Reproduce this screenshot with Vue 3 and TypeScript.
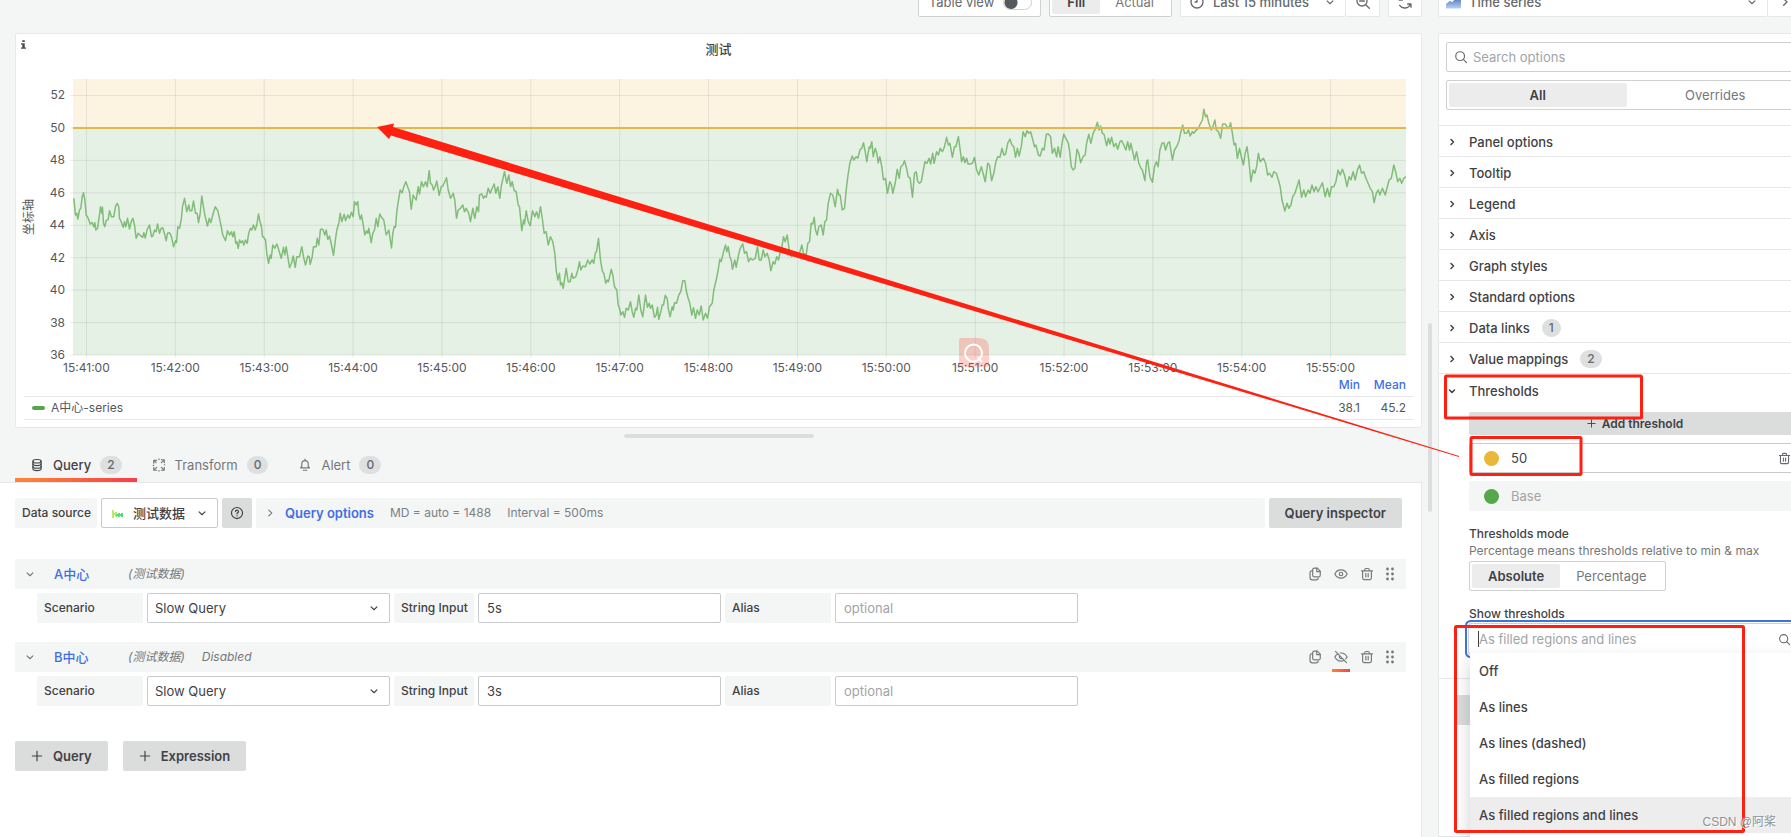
<script setup lang="ts">
import { h, ref } from 'vue'

const shapes: Record<string, string[]> = {
  down: ['M7 10l5 5 5-5'],
  right: ['M10 7l5 5-5 5'],
  plus: ['M12 4v16M4 12h16'],
  search: ['M10.5 3a7.5 7.5 0 1 0 0 15 7.5 7.5 0 0 0 0-15z', 'M16 16l5.5 5.5'],
  zoomOut: ['M10.5 3a7.5 7.5 0 1 0 0 15 7.5 7.5 0 0 0 0-15z', 'M16 16l5.5 5.5M7 10.5h7'],
  clock: ['M12 3a9 9 0 1 0 0 18 9 9 0 0 0 0-18z', 'M12 7v5H9'],
  sync: ['M3 4v5h5M4 9a9 9 0 0 1 16-2M21 20v-5h-5M20 15a9 9 0 0 1-16 2'],
  database: [
    'M12 2.5c4 0 7 1.300 7 3s-3 3-7 3-7-1.300-7-3 3-3 7-3z',
    'M5 5.500v13c0 1.700 3 3 7 3s7-1.300 7-3v-13',
    'M5 10c0 1.700 3 3 7 3s7-1.300 7-3M5 14.500c0 1.700 3 3 7 3s7-1.300 7-3',
  ],
  process: ['M3 9V4h5M4 5l3 3M16 3h5v5M20 4l-4 4M21 16v5h-5M20 20l-4-4M8 21H3v-5M4 20l4-4M2 12.500h1M21 11.500h1M11.500 2h1M11.500 22h1'],
  bell: ['M4.500 17h15l-2-3v-4a5.500 5.500 0 0 0-11 0v4z', 'M9 21h6M12 4V2'],
  help: ['M12 2.500a9.500 9.500 0 1 0 0 19 9.500 9.500 0 0 0 0-19z', 'M9.500 9.500a2.500 2.500 0 1 1 3.500 2.300c-.7.3-1 .8-1 1.700M12 16.500v.5'],
  copy: ['M11 2h5l5 5v7a3 3 0 0 1-3 3h-7a3 3 0 0 1-3-3V5a3 3 0 0 1 3-3z', 'M15 2v6h6M8 6C5 6 3.500 7 3.500 10v8c0 2.500 1.500 4 4 4H14c2.500 0 3.500-1 3.500-3'],
  eye: ['M1.500 12c2-4.300 6-7 10.500-7s8.500 2.700 10.500 7c-2 4.300-6 7-10.500 7S3.500 16.300 1.500 12z', 'M12 9a3 3 0 1 0 0 6 3 3 0 0 0 0-6z'],
  eyeOff: ['M2.500 2.500l19 19', 'M6.500 7c-2 1-4 3-5 5 2 4 6 7 10.500 7 1.500 0 3-.3 4.500-1M10.500 5.200c4.500-.6 9.500 2 12 6.800-.6 1.300-1.500 2.300-2.500 3.200', 'M9.500 10.500a3 3 0 0 0 4 4'],
  trash: ['M2.500 6.500h19M8 6.500V5a2.500 2.500 0 0 1 2.500-2.500h3A2.500 2.500 0 0 1 16 5v1.500M4.500 6.500V19A2.500 2.500 0 0 0 7 21.500h10a2.500 2.500 0 0 0 2.500-2.500V6.500', 'M10 11v6M14 11v6'],
}

const Icon = (props: { name: string }) =>
  h(
    'svg',
    { class: 'icon', viewBox: '0 0 24 24', 'aria-hidden': 'true' },
    shapes[props.name].map((d) => h('path', { d })),
  )
Icon.props = ['name']

const sections = [
  { name: 'Panel options', count: 0 },
  { name: 'Tooltip', count: 0 },
  { name: 'Legend', count: 0 },
  { name: 'Axis', count: 0 },
  { name: 'Graph styles', count: 0 },
  { name: 'Standard options', count: 0 },
  { name: 'Data links', count: 1 },
  { name: 'Value mappings', count: 2 },
]

const tabs = [
  { name: 'Query', icon: 'database', count: 2 },
  { name: 'Transform', icon: 'process', count: 0 },
  { name: 'Alert', icon: 'bell', count: 0 },
]

const queries = ref([
  { id: 'a', name: 'A中心', input: '5s', hidden: false },
  { id: 'b', name: 'B中心', input: '3s', hidden: true },
])

const choices = ['Off', 'As lines', 'As lines (dashed)', 'As filled regions', 'As filled regions and lines']
const chosen = 'As filled regions and lines'

const yTicks = [52, 50, 48, 46, 44, 42, 40, 38, 36]
const xTicks = Array.from({ length: 15 }, (_, i) => `15:${41 + i}:00`)

const W = 1333
const H = 276
const tickY = (v: number) => H - ((v - 36) * 259.500) / 16
const tickX = (i: number) => 13.500 + i * (W / 15)

// Samples come in blocks, each with its own origin and number of steps per unit.
interface Block { x: number; y: number; step: number; samples: string }
const blocks: Block[] = [
  {
    x: -73.5, y: -79, step: 3,
    samples:
      '223,595 228,645 232,640 235,657 240,630 244,625 248,590 252,578 256,600 260,645 266,655 272,672 278,668 283,680 286,668 289,690 294,685 299,650 303,620 307,640 309,622 312,670 316,680 320,662 326,658 330,632 336,650 343,650 348,620 353,610 358,620 360,655 365,665 371,682 375,665 379,680 384,655 390,687 395,665 400,655 405,675 410,715 416,700 424,708 430,712 433,698 437,714 443,688 450,675 456,710 460,708 465,690 470,695 474,672 480,700 485,685 490,683 496,705 500,722 504,700 510,698 516,710 522,740 528,722 531,728 535,680 540,685 545,660 549,620 555,595 562,635 568,615 571,632 577,632 582,603 588,640 593,640 597,668 602,640 607,588 611,615 616,645 624,678 629,655 634,668 640,645 647,620 655,632 660,655 665,680 670,705 678,722 684,692 690,705 696,695 700,710 704,695 709,730 712,725 716,745 720,720 724,728 729,722 733,735 738,720 743,730 748,698 753,685 757,690 762,675 767,690 772,675 777,642 781,662 786,680 789,710 793,712 798,720 802,760 807,790 812,765 815,775 820,735 826,745 832,732 838,750 845,775 852,742 856,765 860,740 865,770 870,803 876,790 881,768 887,802 892,770 900,770 907,740 912,770 918,795 925,768 929,770 932,793 938,770 942,740 950,740 953,715 958,735 963,688 970,688 976,705 980,690 985,718 990,708 996,735 1002,766 1007,725 1012,690 1018,670 1022,640 1027,665 1034,643 1038,662 1045,645 1050,655 1056,637 1061,650 1065,605 1070,615 1075,605 1078,640 1082,658 1086,645 1092,680 1096,705 1101,692 1105,700 1108,685 1115,728 1120,700 1125,690 1130,655 1135,680 1141,642 1148,655 1153,660 1160,705 1168,690 1176,744 1180,700 1184,680 1188,682 1192,635 1197,600 1202,570 1208,578 1213,560 1219,545 1225,562 1230,575 1235,628 1241,585 1245,592 1250,600 1256,560 1260,582 1266,545 1272,560 1278,545 1283,560 1289,512 1293,550 1298,555 1302,570 1307,560 1312,543 1319,586 1325,560 1330,558 1336,545 1341,533 1346,570 1353,595 1361,580 1366,600 1371,655 1376,630 1383,625 1390,615 1395,635 1400,625 1408,640 1413,665 1420,625 1426,655 1432,620 1437,635',
  },
  {
    x: 326.5, y: -19, step: 3,
    samples:
      '240,405 247,402 252,415 256,408 260,412 266,385 272,400 278,385 284,372 289,400 295,380 301,415 306,375 315,335 322,370 328,345 333,380 338,365 344,392 350,395 356,435 360,440 367,512 372,480 375,492 380,452 386,485 392,497 399,452 406,470 411,455 417,475 423,440 429,480 434,520 440,515 446,555 453,530 460,545 466,580 470,630 475,660 480,640 483,675 487,668 491,685 500,625 506,665 512,665 517,640 521,655 529,650 535,630 540,605 544,630 550,618 558,620 565,600 571,612 578,600 583,610 587,580 591,575 597,535 603,600 608,632 613,640 619,670 623,660 627,665 635,628 640,645 645,680 652,690 656,735 660,745 664,765 670,755 675,772 680,745 686,750 693,725 698,755 703,772 708,745 712,750 718,705 724,750 730,770 738,705 744,742 749,730 753,745 758,735 765,772 770,765 774,742 778,778 785,750 788,735 792,735 797,706 803,715 807,750 812,770 818,740 821,750 825,728 831,730 838,705 844,695 850,662 856,662 862,700 866,715 871,730 877,765 882,743 888,775 893,750 899,765 905,738 911,780 918,760 924,775 930,740 938,730 943,690 950,660 956,630 961,598 965,605 971,580 978,555 982,575 986,560 991,590 995,600 999,628 1006,600 1010,622 1017,585 1022,565 1030,552 1035,580 1041,575 1047,605 1053,595 1060,600 1067,595 1074,560 1079,600 1085,600 1091,570 1096,590 1103,580 1109,600 1114,632 1121,605 1126,612 1132,590 1137,600 1144,570 1148,555 1152,530 1157,545 1163,525 1169,570 1176,590 1184,580 1192,590 1200,580 1207,555 1212,580 1220,585 1225,550 1230,545 1235,490 1240,492 1244,472 1248,510 1253,525 1258,500 1265,495 1271,525 1276,485 1281,480 1286,430 1293,400 1300,405 1307,440 1314,388 1318,405 1322,405 1328,450 1335,445 1340,390 1345,350 1351,310 1358,288 1363,300 1370,290 1375,295 1382,268 1387,265 1392,248 1397,275 1402,305 1409,260 1412,265 1417,245 1421,290 1427,265 1432,280 1436,308 1441,290 1447,320 1452,360 1458,355 1464,400 1471,365 1476,375 1480,400 1487,370 1493,328 1499,355 1504,320 1510,315 1515,302 1520,320 1526,350 1532,355 1539,412 1545,340 1550,335 1555,365',
  },
  {
    x: 806.5, y: -79, step: 2.8,
    samples:
      '112,550 117,545 123,510 127,485 133,490 139,475 143,492 149,460 153,490 160,455 165,465 170,445 176,455 182,440 188,412 193,435 197,430 204,472 210,440 214,440 221,410 226,450 230,485 235,470 239,488 244,475 248,492 254,492 260,490 266,472 272,510 278,525 285,500 290,520 296,545 303,490 308,495 314,542 320,520 326,485 331,470 337,472 343,445 348,465 353,462 359,430 365,417 371,435 376,440 381,472 386,445 391,468 397,440 402,395 408,410 413,392 418,400 423,395 428,415 434,440 438,435 445,465 450,468 456,445 461,450 467,403 473,402 479,410 484,460 490,445 496,470 500,440 506,472 511,430 516,403 522,415 529,430 533,460 537,500 542,510 547,505 553,448 558,460 563,488 570,470 576,465 580,430 586,403 592,430 598,400 605,385 610,367 615,390 619,378 624,400 629,403 636,437 641,415 645,432 650,412 656,440 662,430 667,448 673,425 678,422 684,435 690,450 695,425 700,450 704,430 709,455 714,480 720,455 726,490 732,505 736,510 743,542 748,485 751,480 757,530 764,547 770,500 775,485 780,500 785,450 791,430 796,428 801,450 807,430 812,425 820,480 826,450 832,440 838,425 843,400 849,375 854,400 860,400 865,390 870,408 876,395 880,400 887,390 893,385 899,370 904,360 908,328 913,350 917,345 922,370 929,390 935,375 939,360 943,390 949,395 955,415 961,372 968,372 973,380 979,385 983,368 988,400 993,435 997,430 1002,475 1008,445 1013,470 1019,495 1024,460 1029,440 1034,480 1040,545 1046,510 1051,520 1056,500 1061,460 1066,485 1075,475 1081,490 1087,525 1092,520 1099,532 1104,515 1111,520 1117,540 1122,560 1127,600 1135,633 1141,610 1146,625 1152,615 1157,590 1163,580 1169,560 1175,540 1182,592 1188,570 1193,590 1200,570 1205,580 1211,555 1217,575 1222,560 1228,575 1234,562 1240,548 1248,590 1254,565 1260,590 1266,560 1272,560 1278,545 1284,510 1290,525 1296,508 1302,525 1309,560 1315,530 1320,540 1326,515 1332,540 1338,510 1344,495 1350,520 1356,515 1362,535 1368,550 1374,565 1380,575 1385,608 1391,580 1396,570 1401,585 1408,565 1416,585 1422,560 1427,540 1433,535 1440,495 1445,515 1451,545 1457,535 1462,550 1468,535 1474,530',
  },
]
const points = blocks
  .flatMap((b) =>
    b.samples.split(' ').map((s) => {
      const [x, y] = s.split(',').map(Number)
      return `${(b.x + x / b.step).toFixed(1)},${(b.y + y / 3).toFixed(1)}`
    }),
  )
  .join(' ')
</script>

<template>
  <div class="page">
    <main class="left">
      <div class="toolbar">
        <label class="tool table-view">
          Table view
          <input type="checkbox" class="switch" />
        </label>
        <div class="radio-group" role="radiogroup" aria-label="Panel size">
          <label class="radio fill"><input type="radio" name="size" checked />Fill</label>
          <label class="radio actual"><input type="radio" name="size" />Actual</label>
        </div>
        <div class="time-group">
          <button type="button" class="tool time"><Icon name="clock" />Last 15 minutes<Icon name="down" class="push" /></button>
          <button type="button" class="tool square" aria-label="Zoom out"><Icon name="zoomOut" /></button>
        </div>
        <button type="button" class="tool square" aria-label="Refresh"><Icon name="sync" /></button>
      </div>

      <section class="panel">
        <svg class="info" viewBox="0 0 6 10" aria-hidden="true"><path d="M1.500 0h3v2h-3zM0 3.500h4.500v5H6V10H0V8.500h1.500V5H0z" /></svg>
        <h2 class="panel-title">测试</h2>
        <div class="chart">
          <div class="axis-name"><span>坐标轴</span></div>
          <div class="y-axis">
            <span v-for="t in yTicks" :key="t">{{ t }}</span>
          </div>
          <svg class="plot" :viewBox="`0 0 ${W} ${H}`" preserveAspectRatio="none" role="img" aria-label="A中心-series">
            <rect class="region-high" x="0" y="0" :width="W" :height="tickY(50)" />
            <rect class="region-base" x="0" :y="tickY(50)" :width="W" :height="H - tickY(50)" />
            <line v-for="t in yTicks" :key="t" class="grid" x1="-3" :x2="W" :y1="tickY(t)" :y2="tickY(t)" />
            <line v-for="(t, i) in xTicks" :key="t" class="grid" :x1="tickX(i)" :x2="tickX(i)" y1="0" :y2="H + 3" />
            <polyline class="series" :points="points" />
            <line class="limit" x1="0" :x2="W" :y1="tickY(50)" :y2="tickY(50)" />
          </svg>
          <div class="x-axis">
            <span v-for="t in xTicks" :key="t">{{ t }}</span>
          </div>
        </div>
        <table class="legend">
          <thead>
            <tr><th class="name" aria-label="Series"></th><th>Min</th><th>Mean</th></tr>
          </thead>
          <tbody>
            <tr><td class="name"><i class="swatch"></i>A中心-series</td><td>38.1</td><td>45.2</td></tr>
          </tbody>
        </table>
      </section>

      <div class="handle"></div>

      <nav class="tabs">
        <button v-for="(t, i) in tabs" :key="t.name" type="button" class="tab" :class="{ active: i === 0 }">
          <Icon :name="t.icon" />{{ t.name }}<span class="badge">{{ t.count }}</span>
        </button>
      </nav>

      <section class="editor">
        <div class="source-row">
          <label class="tag" for="source">Data source</label>
          <div class="picker source">
            <svg class="logo" viewBox="0 0 12 8" aria-hidden="true">
              <path class="lime" d="M1 0v8M1 4h3M4 2v5" />
              <path class="green" d="M4 5h3M7 3v4M7 5h4M10 3v4" />
            </svg>
            <select id="source"><option>测试数据</option></select>
            <Icon name="down" />
          </div>
          <button type="button" class="solid help" aria-label="Help"><Icon name="help" /></button>
          <div class="options-bar">
            <Icon name="right" />
            <button type="button" class="link">Query options</button>
            <span>MD = auto = 1488</span>
            <span>Interval = 500ms</span>
          </div>
          <button type="button" class="solid inspector">Query inspector</button>
        </div>

        <article v-for="q in queries" :key="q.id" class="query">
          <header class="query-head">
            <Icon name="down" />
            <button type="button" class="link query-name">{{ q.name }}</button>
            <em>(测试数据)</em>
            <em v-if="q.hidden">Disabled</em>
            <div class="actions">
              <button type="button" aria-label="Duplicate query"><Icon name="copy" /></button>
              <button type="button" :class="{ off: q.hidden }" aria-label="Toggle query"><Icon :name="q.hidden ? 'eyeOff' : 'eye'" /></button>
              <button type="button" aria-label="Remove query"><Icon name="trash" /></button>
              <svg class="grip" viewBox="0 0 8 14" aria-hidden="true">
                <template v-for="y in [2, 7, 12]" :key="y">
                  <circle cx="1.500" :cy="y" r="1.400" /><circle cx="6.500" :cy="y" r="1.400" />
                </template>
              </svg>
            </div>
          </header>
          <div class="fields">
            <label class="tag wide" :for="`scenario-${q.id}`">Scenario</label>
            <div class="picker">
              <select :id="`scenario-${q.id}`"><option>Slow Query</option></select>
              <Icon name="down" />
            </div>
            <label class="tag medium" :for="`text-${q.id}`">String Input</label>
            <input :id="`text-${q.id}`" v-model="q.input" class="box" type="text" />
            <label class="tag wide" :for="`alias-${q.id}`">Alias</label>
            <input :id="`alias-${q.id}`" class="box" type="text" placeholder="optional" />
          </div>
        </article>

        <div class="add-row">
          <button type="button" class="solid add"><Icon name="plus" />Query</button>
          <button type="button" class="solid add"><Icon name="plus" />Expression</button>
        </div>
      </section>
    </main>

    <div class="gutter"><span></span></div>

    <aside class="right">
      <div class="viz-row">
        <button type="button" class="tool viz">
          <svg class="viz-icon" viewBox="0 0 16 14" aria-hidden="true">
            <defs><linearGradient id="area" x2="0" y2="1"><stop offset="0" stop-color="#3865ab" /><stop offset="1" stop-color="#b9d1f5" /></linearGradient></defs>
            <path fill="url(#area)" d="M0 14V9l4-3 3 1 4-5 2 1 3-3v14z" />
          </svg>
          Time series<Icon name="down" class="push" />
        </button>
        <button type="button" class="tool square" aria-label="Close options"><Icon name="right" /></button>
      </div>

      <div class="options">
        <div class="options-head">
          <div class="search">
            <Icon name="search" />
            <input type="text" placeholder="Search options" aria-label="Search options" />
          </div>
          <div class="radio-group full" role="radiogroup" aria-label="Options filter">
            <label class="radio"><input type="radio" name="filter" checked />All</label>
            <label class="radio"><input type="radio" name="filter" />Overrides</label>
          </div>
        </div>

        <button v-for="s in sections" :key="s.name" type="button" class="section-head">
          <Icon name="right" />{{ s.name }}<span v-if="s.count" class="badge">{{ s.count }}</span>
        </button>
        <button type="button" class="section-head open" aria-expanded="true"><Icon name="down" />Thresholds</button>

        <div class="thresholds">
          <button type="button" class="solid add-threshold"><Icon name="plus" />Add threshold</button>
          <div class="threshold">
            <i class="dot amber"></i>
            <input type="text" value="50" aria-label="Threshold value" />
            <button type="button" aria-label="Remove threshold"><Icon name="trash" /></button>
          </div>
          <div class="threshold base">
            <i class="dot green"></i>
            <input type="text" value="Base" disabled aria-label="Base threshold" />
          </div>
          <h3>Thresholds mode</h3>
          <p>Percentage means thresholds relative to min &amp; max</p>
          <div class="radio-group mode" role="radiogroup" aria-label="Thresholds mode">
            <label class="radio"><input type="radio" name="mode" checked />Absolute</label>
            <label class="radio"><input type="radio" name="mode" />Percentage</label>
          </div>
          <label class="show-label" for="show">Show thresholds</label>
          <div class="combo">
            <i class="caret"></i>
            <input id="show" type="text" role="combobox" aria-expanded="true" aria-controls="show-list" :placeholder="chosen" />
            <Icon name="search" />
            <ul id="show-list" class="menu" role="listbox">
              <li v-for="c in choices" :key="c" role="option" :aria-selected="c === chosen" :class="{ selected: c === chosen }">{{ c }}</li>
            </ul>
          </div>
        </div>
        <div class="override-row"><button type="button" class="solid" aria-label="Add field override"></button></div>
      </div>
    </aside>

    <svg class="marks" width="1791" height="837" viewBox="0 0 1791 837" aria-hidden="true">
      <path class="search-chip" d="M961 338h18q10 0 10 10v16q0 3-3 3h-24q-3 0-3-3v-24q0-2 2-2z" />
      <path class="search-glass" d="M973.500 344.500a8.500 8.500 0 1 0 0 17 8.500 8.500 0 0 0 0-17zM978 357l4 5" />
      <polygon points="377,127 394,123.500 393,127 1459,456 1459,457 391,135.500 389,139" />
      <rect x="1445.500" y="376" width="196" height="42" rx="1" />
      <rect x="1471" y="437.500" width="110" height="37" rx="1" />
      <rect x="1455.500" y="626.500" width="288" height="205" rx="1" />
    </svg>
    <span class="watermark">CSDN @阿桨</span>
  </div>
</template>

<style>
body {
  margin: 0;
}
</style>

<style scoped>
.page {
  position: relative;
  display: flex;
  height: 100vh;
  overflow: hidden;
  background: #f4f5f5;
  color: #3f4246;
  font: 500 13px/18px Inter, "Noto Sans CJK SC", sans-serif;
}
.page * {
  box-sizing: border-box;
}
button,
input,
select {
  padding: 0;
  border: 0;
  background: none;
  color: inherit;
  font: inherit;
  outline: 0;
}
input,
select {
  font-weight: 400;
}
input::placeholder {
  color: #a2a4a6;
  opacity: 1;
}
.icon {
  width: 14px;
  height: 14px;
  flex: none;
  fill: none;
  stroke: currentColor;
  stroke-width: 2;
  stroke-linecap: round;
  stroke-linejoin: round;
}
.push {
  margin-left: auto;
}

.left {
  flex: 1;
  min-width: 0;
  display: flex;
  flex-direction: column;
}
.toolbar {
  display: flex;
  justify-content: flex-end;
  gap: 8px;
  margin-top: -13px;
}
.tool {
  display: flex;
  align-items: center;
  height: 30px;
  padding: 0 10px;
  border: 1px solid #e6e7e8;
  border-radius: 2px;
  background: #fff;
  color: #66696d;
}
.table-view {
  gap: 9px;
  padding: 0 8px 0 10px;
  border-color: #cfd0d1;
  font-weight: 400;
}
.switch {
  appearance: none;
  width: 29px;
  height: 15px;
  margin: 0;
  border: 1px solid #cfd0d1;
  border-radius: 8px;
  background: radial-gradient(circle at 7px 50%, #55585c 6px, #fff 7px);
}
.radio-group {
  display: flex;
  height: 30px;
  padding: 2px;
  border: 1px solid #cfd0d1;
  border-radius: 2px;
  background: #fff;
}
.radio {
  display: flex;
  flex: 1 0 auto;
  align-items: center;
  justify-content: center;
  padding: 0 15px;
  border-radius: 2px;
  color: #75787b;
  font-weight: 400;
}
.radio:has(input:checked) {
  background: #ececed;
  color: #3f4246;
  font-weight: 600;
}
.radio input {
  position: absolute;
  opacity: 0;
  width: 0;
  height: 0;
  margin: 0;
}
.time-group {
  display: flex;
}
.time {
  width: 166px;
  gap: 8px;
  padding: 0 8px;
}
.square {
  width: 34px;
  justify-content: center;
  padding: 0;
}
.time-group .square {
  border-left: 0;
}
.square .icon,
.time .icon:first-child {
  width: 16px;
  height: 16px;
}

.panel {
  position: relative;
  margin: 16px 0 0 15px;
  padding: 6px 8px 7px;
  height: 395px;
  border: 1px solid #e8e9ea;
  border-radius: 2px;
  background: #fff;
}
.info {
  position: absolute;
  top: 6px;
  left: 5px;
  width: 5px;
  height: 9px;
  fill: #4a4d55;
}
.panel-title {
  margin: 0;
  font: inherit;
  font-size: 13px;
  text-align: center;
}
.chart {
  display: grid;
  grid-template-columns: 10px 31px 1fr;
  grid-template-rows: 276px 18px;
  row-gap: 4px;
  margin: 21px 7px 0 0;
  color: #55585c;
  font-size: 12px;
  font-weight: 400;
}
.axis-name {
  display: flex;
  align-items: center;
  justify-content: center;
}
.axis-name span {
  flex: none;
  writing-mode: vertical-rl;
  text-orientation: sideways;
  transform: rotate(180deg);
}
.y-axis {
  display: flex;
  flex-direction: column;
  justify-content: space-between;
  margin: 7px 0 -9px;
  text-align: right;
}
.plot {
  width: calc(100% - 8px);
  height: 276px;
  margin-left: 8px;
  overflow: visible;
}
.region-high {
  fill: #fcf3e0;
}
.region-base {
  fill: #e6f1e5;
}
.grid {
  stroke: rgba(36, 41, 46, 0.09);
  stroke-width: 1;
  vector-effect: non-scaling-stroke;
}
.series {
  fill: none;
  stroke: #56a64b;
  stroke-opacity: 0.7;
  stroke-width: 1.500;
  stroke-linejoin: round;
  vector-effect: non-scaling-stroke;
}
.limit {
  stroke: #e0b84e;
  stroke-width: 2;
  vector-effect: non-scaling-stroke;
}
.x-axis {
  grid-column: 3;
  display: grid;
  grid-template-columns: repeat(15, 1fr);
  margin: 0 31px 0 -23px;
  text-align: center;
}
.legend {
  width: 100%;
  border-collapse: collapse;
  color: #55585c;
  font-size: 12px;
}
.legend th,
.legend td {
  width: 46px;
  height: 23px;
  padding: 0 7px 1px 0;
  border-bottom: 1px solid #e6e7e8;
  font-weight: 400;
  text-align: right;
}
.legend th {
  height: 19px;
  padding-bottom: 3px;
  color: #3f6fe4;
  font-weight: 500;
  line-height: 16px;
}
.legend .name {
  width: auto;
  padding-left: 8px;
  text-align: left;
}
.swatch {
  display: inline-block;
  width: 13px;
  height: 4px;
  margin-right: 6px;
  border-radius: 2px;
  background: #56a64b;
  vertical-align: middle;
}
.handle {
  align-self: center;
  width: 190px;
  height: 4px;
  margin: 6px 0 0 15px;
  border-radius: 2px;
  background: #dcdddd;
}

.tabs {
  display: flex;
  height: 44px;
  padding: 13px 0 0 15px;
}
.tab {
  display: flex;
  align-items: center;
  gap: 9px;
  padding: 0 15px;
  border-bottom: 4px solid transparent;
  color: #75787b;
  font-weight: 400;
}
.tab.active {
  border-image: linear-gradient(90deg, #ff8833, #f53e4c) 1;
  border-width: 0 0 4px;
  color: #3f4246;
  font-weight: 500;
}
.badge {
  padding: 0 7px;
  border-radius: 9px;
  background: #dedfe0;
  color: #66696d;
  font-size: 12px;
  font-weight: 500;
}

.editor {
  flex: 1;
  padding: 15px 15px 0;
  border: 1px solid #e6e7e8;
  border-width: 1px 1px 0 0;
  background: #fff;
}
.source-row {
  display: flex;
  gap: 4px;
  margin: 0 4px 31px 0;
}
.tag {
  display: flex;
  align-items: center;
  height: 30px;
  padding: 0 6px 0 7px;
  border-radius: 2px;
  background: #f4f5f5;
  font-size: 12px;
  font-weight: 500;
}
.tag.wide {
  width: 106px;
}
.tag.medium {
  width: 80px;
  padding-right: 0;
}
.picker {
  position: relative;
  width: 243px;
  height: 30px;
  border: 1px solid #c9cacb;
  border-radius: 2px;
}
.picker select {
  width: 100%;
  height: 28px;
  padding-left: 7px;
  appearance: none;
}
.picker .icon {
  position: absolute;
  top: 7px;
  right: 8px;
  pointer-events: none;
}
.picker.source {
  width: 117px;
}
.source select {
  padding-left: 31px;
  font-weight: 500;
}
.logo {
  position: absolute;
  top: 11px;
  left: 10px;
  width: 12px;
  height: 8px;
  fill: none;
  stroke-width: 2;
}
.lime {
  stroke: #b6ee62;
}
.green {
  stroke: #52e07a;
}
.solid {
  display: flex;
  align-items: center;
  justify-content: center;
  height: 30px;
  border-radius: 2px;
  background: #dbdcdc;
  font-weight: 600;
}
.help {
  width: 30px;
}
.options-bar {
  flex: 1;
  display: flex;
  align-items: center;
  gap: 16px;
  padding-left: 7px;
  border-radius: 2px;
  background: #f4f5f5;
  color: #7d8083;
  font-size: 12px;
  font-weight: 400;
}
.options-bar .icon {
  margin-right: -8px;
}
.link {
  color: #3f6fe4;
  font-size: 13px;
  font-weight: 500;
}
.options-bar .link {
  font-weight: 600;
}
.inspector {
  padding: 0 16px;
}
.query {
  margin-bottom: 19px;
}
.query-head {
  display: flex;
  align-items: center;
  height: 30px;
  padding: 0 12px 0 8px;
  background: #f4f5f5;
  color: #75787b;
}
.query-name {
  width: 60px;
  margin: 0 14px 0 17px;
  text-align: left;
}
.query-head em {
  margin-right: 17px;
  font-size: 12px;
  font-weight: 400;
}
.actions {
  display: flex;
  align-items: center;
  gap: 8px;
  height: 30px;
  margin-left: auto;
}
.actions button {
  display: flex;
  align-items: center;
  justify-content: center;
  width: 18px;
  height: 30px;
  border-bottom: 3px solid transparent;
  border-top: 3px solid transparent;
}
.actions .off {
  border-image: linear-gradient(90deg, #ff8833, #f53e4c) 1;
  border-width: 0 0 3px;
  padding-top: 3px;
}
.grip {
  width: 8px;
  height: 14px;
  margin-left: 2px;
  fill: #75787b;
}
.fields {
  display: flex;
  gap: 4px;
  padding: 4px 0 0 22px;
}
.box {
  width: 243px;
  height: 30px;
  padding-left: 8px;
  border: 1px solid #c9cacb;
  border-radius: 2px;
}
.add-row {
  display: flex;
  gap: 15px;
  margin-top: 35px;
}
.add {
  gap: 9px;
  padding: 0 16px 0 15px;
}

.gutter {
  width: 16px;
  padding: 323px 0 0 6px;
}
.gutter span {
  display: block;
  width: 4px;
  height: 189px;
  border-radius: 2px;
  background: #dcdddf;
}

.right {
  display: flex;
  flex-direction: column;
  flex: none;
  width: 377px;
  margin-right: -24px;
}
.viz-row {
  display: flex;
  margin-top: -13px;
}
.viz {
  width: 330px;
  gap: 8px;
  padding: 0 8px 0 7px;
}
.viz-row .square {
  border-left: 0;
}
.viz-icon {
  width: 15px;
  height: 14px;
}
.options {
  flex: 1;
  margin-top: 16px;
  border: 1px solid #e6e7e8;
  background: #fff;
}
.options-head {
  display: flex;
  flex-direction: column;
  gap: 8px;
  padding: 8px 7px 15px;
}
.search {
  display: flex;
  align-items: center;
  gap: 5px;
  height: 30px;
  padding-left: 7px;
  border: 1px solid #cfd0d1;
  border-radius: 2px;
  color: #66696d;
}
.full .radio {
  flex: 1 1 0;
}
.section-head {
  display: flex;
  align-items: center;
  width: 100%;
  height: 31px;
  padding: 2px 0 0 7px;
  border-top: 1px solid #e6e7e8;
}
.section-head.open {
  height: 32px;
}
.section-head .icon {
  width: 12px;
  height: 12px;
  margin-right: 11px;
  stroke-width: 3;
}
.section-head .badge {
  margin-left: 12px;
}
.thresholds {
  padding: 7px 14px 24px 30px;
  border-bottom: 1px solid #e6e7e8;
}
.add-threshold {
  width: 100%;
  height: 23px;
  gap: 5px;
  font-size: 12px;
}
.add-threshold .icon {
  width: 11px;
  height: 11px;
}
.threshold {
  display: flex;
  align-items: center;
  height: 30px;
  margin-top: 8px;
  padding: 0 8px 0 14px;
  border: 1px solid #c9cacb;
  border-radius: 2px;
}
.threshold input {
  flex: 1;
  min-width: 0;
}
.threshold.base {
  border-color: #f4f5f5;
  background: #f4f5f5;
}
.threshold.base input {
  color: #a2a4a6;
}
.threshold button {
  display: flex;
  color: #66696d;
}
.dot {
  width: 15px;
  height: 15px;
  margin-right: 12px;
  border-radius: 50%;
}
.amber {
  background: #eab839;
}
.dot.green {
  background: #56a64b;
}
h3,
.show-label {
  display: block;
  margin: 14px 0 0;
  font-size: 12px;
  font-weight: 500;
  line-height: 17px;
}
p {
  margin: 0 0 2px;
  color: #75787b;
  font-size: 12px;
  font-weight: 400;
  line-height: 17px;
  white-space: nowrap;
}
.mode {
  width: max-content;
}
.mode .radio {
  padding: 0 16px;
}
.combo {
  position: relative;
  display: flex;
  align-items: center;
  height: 30px;
  margin-top: 2px;
  padding: 0 9px;
  border-radius: 2px;
  box-shadow: 0 0 0 1px #cfd0d1, 0 0 0 2px #fff, 0 0 0 4px #3f73dc;
  color: #66696d;
}
.combo input {
  flex: 1;
}
.combo .icon,
.threshold .icon {
  width: 13px;
  height: 13px;
}
.caret {
  width: 1px;
  height: 16px;
  background: #3f4246;
}
.menu {
  position: absolute;
  top: 29px;
  left: 1px;
  right: 0;
  height: 200px;
  margin: 0;
  padding: 0;
  background: #fff;
  box-shadow: 0 8px 16px rgba(24, 26, 27, 0.2);
  color: #3f4246;
  list-style: none;
}
.menu li {
  height: 36px;
  padding: 9px;
}
.menu .selected {
  background: #ededee;
}
.override-row {
  padding: 16px 17px;
}
.override-row .solid {
  width: 100%;
}

.marks {
  position: absolute;
  top: 0;
  left: 0;
  pointer-events: none;
}
.marks polygon {
  fill: #ff2012;
}
.marks rect {
  fill: none;
  stroke: #ff2012;
  stroke-width: 3;
}
.search-chip {
  fill: rgba(255, 84, 76, 0.28);
}
.search-glass {
  fill: none;
  stroke: #fff;
  stroke-width: 2;
}
.watermark {
  position: absolute;
  right: 15px;
  bottom: 6px;
  color: #8f9194;
  font: 400 12px/18px "Liberation Sans", "Noto Sans CJK SC", sans-serif;
  text-shadow: 1px 1px 0 #fff;
}
</style>
